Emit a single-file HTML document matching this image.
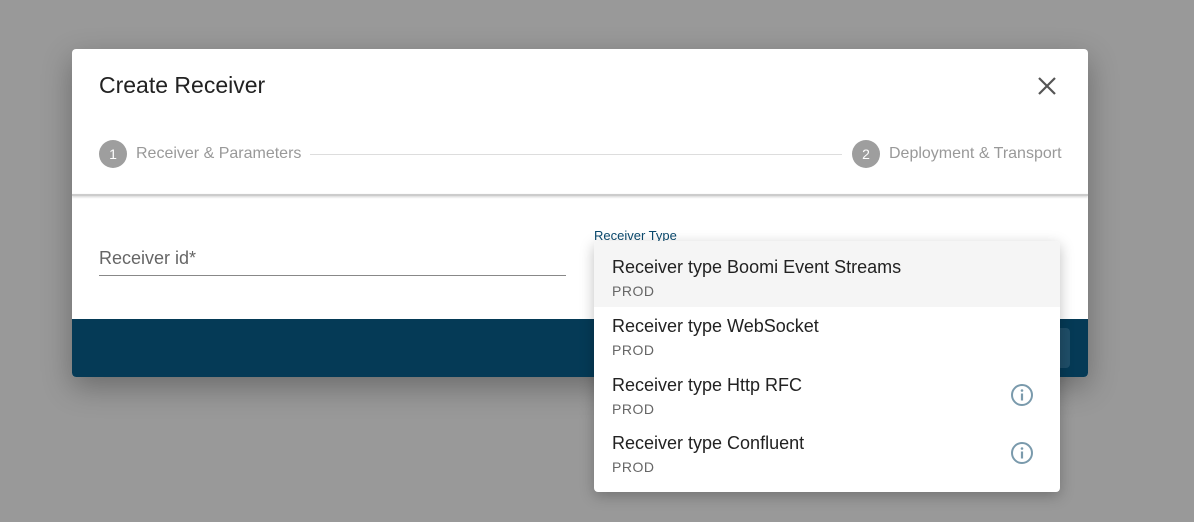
<!DOCTYPE html>
<html><head><meta charset="utf-8"><style>
*{margin:0;padding:0;box-sizing:border-box}
body{width:1194px;height:522px;background:#999;font-family:"Liberation Sans",sans-serif;position:relative;overflow:hidden}
.modal{position:absolute;left:72px;top:49px;width:1016px;height:328px;background:#fff;border-radius:4px;overflow:hidden;box-shadow:0 10px 30px rgba(0,0,0,.3)}
.title{position:absolute;left:27px;top:23px;font-size:23px;color:#222}
.close{position:absolute;left:965px;top:27px}
.step{position:absolute;top:91px;height:28px;display:flex;align-items:center;font-size:16px;color:#999}
.circ{width:28px;height:28px;border-radius:50%;background:#9e9e9e;color:#fff;font-size:14px;display:flex;align-items:center;justify-content:center;margin-right:9px}
.line{position:absolute;left:238px;top:105px;width:532px;height:1px;background:#ddd}
.hdr{position:absolute;left:0;top:145px;width:100%;height:2px;background:#ccc;box-shadow:0 1px 2px rgba(0,0,0,.2)}
.lbl{position:absolute;left:27px;top:199px;font-size:18px;color:#666}
.ul{position:absolute;left:27px;top:226px;width:467px;height:1px;background:#888}
.foot{position:absolute;left:0;top:270px;width:100%;height:58px;background:#053a56}
.btn{position:absolute;left:960px;top:9px;width:38px;height:40px;background:#1f4e68;border-radius:4px}
.rt{position:absolute;left:594px;top:228px;font-size:13px;color:#0b4a6e}
.dd{position:absolute;left:594px;top:241px;width:466px;height:251px;background:#fff;border-radius:4px;box-shadow:0 4px 14px rgba(0,0,0,.25);overflow:hidden}
.it{height:58.6px;padding-left:18px;position:relative}
.it .a{position:absolute;font-size:18px;color:#222}
.it .b{position:absolute;font-size:14px;color:#666;letter-spacing:.5px}
.it svg{position:absolute;left:416px}
</style></head><body>
<div class="modal">
<div class="title">Create Receiver</div>
<svg class="close" width="20" height="20" viewBox="0 0 20 20"><path d="M2 2L18 18M18 2L2 18" stroke="#555" stroke-width="2.2"/></svg>
<div class="step" style="left:27px"><div class="circ">1</div>Receiver &amp; Parameters</div>
<div class="line"></div>
<div class="step" style="left:780px"><div class="circ">2</div>Deployment &amp; Transport</div>
<div class="hdr"></div>
<div class="lbl">Receiver id*</div>
<div class="ul"></div>
<div class="foot"><div class="btn"></div></div>
</div>
<div class="rt">Receiver Type</div>
<div class="dd">
<div class="it" style="background:#f5f5f5;height:66px"><div class="a" style="top:16px">Receiver type Boomi Event Streams</div><div class="b" style="top:42px">PROD</div></div>
<div class="it"><div class="a" style="top:9px">Receiver type WebSocket</div><div class="b" style="top:35px">PROD</div></div>
<div class="it"><div class="a" style="top:9px">Receiver type Http RFC</div><div class="b" style="top:35px">PROD</div><svg width="24" height="24" viewBox="0 0 24 24" style="top:17px"><circle cx="12" cy="12" r="10" fill="none" stroke="#7a9aac" stroke-width="2"/><circle cx="12" cy="7.5" r="1.3" fill="#7a9aac"/><path d="M12 10.5v7" stroke="#7a9aac" stroke-width="2.2"/></svg></div>
<div class="it"><div class="a" style="top:9px">Receiver type Confluent</div><div class="b" style="top:35px">PROD</div><svg width="24" height="24" viewBox="0 0 24 24" style="top:17px"><circle cx="12" cy="12" r="10" fill="none" stroke="#7a9aac" stroke-width="2"/><circle cx="12" cy="7.5" r="1.3" fill="#7a9aac"/><path d="M12 10.5v7" stroke="#7a9aac" stroke-width="2.2"/></svg></div>
</div>
</body></html>
